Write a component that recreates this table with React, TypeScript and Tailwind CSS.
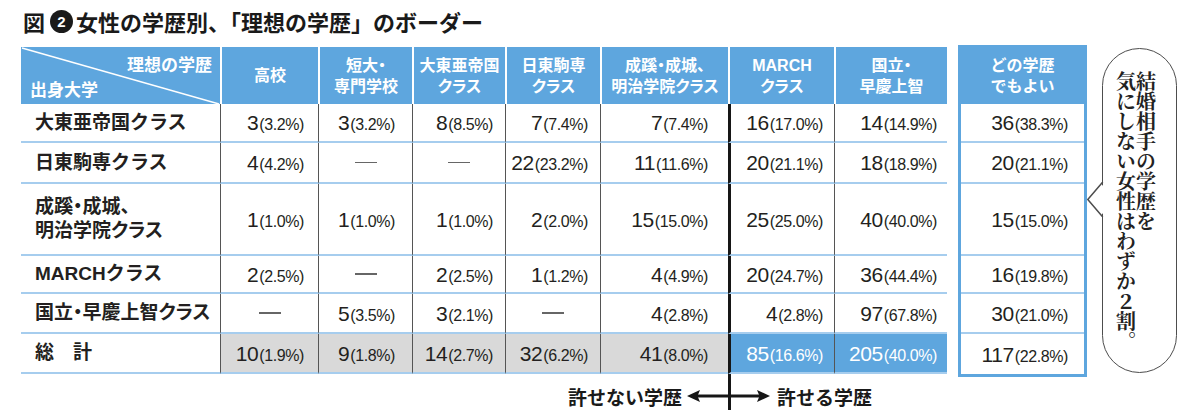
import React from 'react';

type Cell = [string, string] | null;

interface Row {
  label: string[];
  h: string;
  cells: Cell[];
  any: [string, string];
  total?: boolean;
  palt?: boolean;
}

const rows: Row[] = [
  {
    label: ['大東亜帝国クラス'],
    h: 'h-[39px]',
    cells: [['3', '3.2'], ['3', '3.2'], ['8', '8.5'], ['7', '7.4'], ['7', '7.4'], ['16', '17.0'], ['14', '14.9']],
    any: ['36', '38.3'],
  },
  {
    label: ['日東駒専クラス'],
    h: 'h-[41px]',
    cells: [['4', '4.2'], null, null, ['22', '23.2'], ['11', '11.6'], ['20', '21.1'], ['18', '18.9']],
    any: ['20', '21.1'],
  },
  {
    label: ['成蹊・成城、', '明治学院クラス'],
    h: 'h-[72px]',
    cells: [['1', '1.0'], ['1', '1.0'], ['1', '1.0'], ['2', '2.0'], ['15', '15.0'], ['25', '25.0'], ['40', '40.0']],
    any: ['15', '15.0'],
    palt: true,
  },
  {
    label: ['MARCHクラス'],
    h: 'h-[38px]',
    cells: [['2', '2.5'], null, ['2', '2.5'], ['1', '1.2'], ['4', '4.9'], ['20', '24.7'], ['36', '44.4']],
    any: ['16', '19.8'],
  },
  {
    label: ['国立・早慶上智クラス'],
    h: 'h-[40px]',
    cells: [null, ['5', '3.5'], ['3', '2.1'], null, ['4', '2.8'], ['4', '2.8'], ['97', '67.8']],
    any: ['30', '21.0'],
    palt: true,
  },
  {
    label: ['総　計'],
    h: 'h-[40px]',
    cells: [['10', '1.9'], ['9', '1.8'], ['14', '2.7'], ['32', '6.2'], ['41', '8.0'], ['85', '16.6'], ['205', '40.0']],
    any: ['117', '22.8'],
    total: true,
  },
];

const headers: string[][] = [
  ['高校'],
  ['短大・', '専門学校'],
  ['大東亜帝国', 'クラス'],
  ['日東駒専', 'クラス'],
  ['成蹊・成城、', '明治学院クラス'],
  ['MARCH', 'クラス'],
  ['国立・', '早慶上智'],
];

const colPad = ['pr-[14px]', 'pr-[17px]', 'pr-[12px]', 'pr-[12px]', 'pr-[20px]', 'pr-[11px]', 'pr-[10px]'];
const colBorder = [
  'border-l-[1.5px] border-l-[#555]',
  'border-l-[1.5px] border-l-[#555]',
  'border-l-[1.5px] border-l-[#555]',
  'border-l-[1.5px] border-l-[#555]',
  'border-l-[1.5px] border-l-[#555]',
  'border-l-[3px] border-l-[#161616]',
  'border-l-[1.5px] border-l-[#555]',
];

const GRID = 'grid grid-cols-[199px_98px_94px_93px_95px_128px_106px_113px]';

function Num({ v, white }: { v: [string, string]; white?: boolean }) {
  return (
    <span
      className={`font-['Liberation_Sans',sans-serif] leading-none whitespace-nowrap tracking-[-0.4px] ${
        white ? 'text-white' : 'text-[#231f20]'
      }`}
    >
      <span className="text-[21px]">{v[0]}</span>
      <span className="text-[16px] ml-[1px]">({v[1]}%)</span>
    </span>
  );
}

function Dash() {
  return <span className="block w-[22px] h-[1.5px] bg-[#666]" />;
}

export default function App() {
  return (
    <div className="w-[1200px] h-[410px] bg-white overflow-hidden pl-[21px] font-['Liberation_Sans','Noto_Sans_CJK_JP',sans-serif]">
      {/* Title */}
      <div className="h-[47px] flex items-center pb-[5px] pl-[2px] font-['Noto_Sans_CJK_JP',sans-serif] font-bold text-[22px] text-[#1a1a1a] leading-none">
        <span>図</span>
        <span className="ml-[5px] mr-[3px] w-[23px] h-[23px] rounded-full bg-[#1a1a1a] text-white text-[15px] flex items-center justify-center font-['Liberation_Sans',sans-serif]">
          2
        </span>
        <span>女性の学歴別、「理想の学歴」のボーダー</span>
      </div>

      <div className="flex items-start">
        {/* Main table + legend */}
        <div className="w-[926px] flex flex-col">
          {/* Header */}
          <div className={`${GRID} h-[57px] bg-[#5ea6de] text-white font-bold`}>
            <div className="relative h-full flex flex-col justify-between pt-[9px] pb-[3px] text-[17px] leading-[20px]">
              <svg
                className="absolute inset-0 w-full h-full"
                viewBox="0 0 199 57"
                preserveAspectRatio="none"
              >
                <line x1="1" y1="1" x2="198" y2="57" stroke="white" strokeWidth="1.5" />
              </svg>
              <span className="relative self-end pr-[8px]">理想の学歴</span>
              <span className="relative self-start pl-[9px]">出身大学</span>
            </div>
            {headers.map((h, i) => (
              <div
                key={i}
                className="h-full border-l-2 border-l-white flex flex-col items-center justify-center text-[16px] leading-[21px] whitespace-nowrap [font-feature-settings:'palt']"
              >
                {h.map((t, j) => (
                  <span key={j}>{t}</span>
                ))}
              </div>
            ))}
          </div>

          {/* Body */}
          {rows.map((r, ri) => (
            <div key={ri} className={`${GRID} ${r.h}`}>
              <div className="h-full border-b-2 border-b-[#a6cdee] flex flex-col justify-center pl-[14px] font-bold text-[19px] leading-[24px] text-[#231f20]">
                {r.label.map((t, j) => (
                  <span
                    key={j}
                    className={`whitespace-pre ${r.palt ? "[font-feature-settings:'palt']" : ''}`}
                  >
                    {t}
                  </span>
                ))}
              </div>
              {r.cells.map((c, ci) => {
                const bg = r.total ? (ci >= 5 ? 'bg-[#5ea6de]' : 'bg-[#d9d9d9]') : 'bg-white';
                return (
                  <div
                    key={ci}
                    className={`h-full border-b-2 border-b-[#a6cdee] ${colBorder[ci]} ${bg} flex items-center ${
                      c ? `justify-end ${colPad[ci]}` : 'justify-center'
                    }`}
                  >
                    {c ? <Num v={c} white={r.total && ci >= 5} /> : <Dash />}
                  </div>
                );
              })}
            </div>
          ))}

          {/* Legend */}
          <div className="flex h-[36px]">
            <div className="w-[707px] h-full flex items-center justify-end pt-[8px] font-['Noto_Sans_CJK_JP',sans-serif] font-bold text-[19px] leading-none text-[#1a1a1a]">
              <span>許せない学歴</span>
              <svg className="ml-[5px]" width="41" height="14" viewBox="0 0 41 14">
                <polygon points="0,7 13,1 10.5,7 13,13" fill="#161616" />
                <line x1="9" y1="7" x2="41" y2="7" stroke="#161616" strokeWidth="3" />
              </svg>
            </div>
            <div className="w-[3px] h-full bg-[#161616]" />
            <div className="h-full flex items-center pt-[8px] font-['Noto_Sans_CJK_JP',sans-serif] font-bold text-[19px] leading-none text-[#1a1a1a]">
              <svg width="39" height="14" viewBox="0 0 39 14">
                <line x1="0" y1="7" x2="30" y2="7" stroke="#161616" strokeWidth="3" />
                <polygon points="39,7 26,1 28.5,7 26,13" fill="#161616" />
              </svg>
              <span className="ml-[7px]">許せる学歴</span>
            </div>
          </div>
        </div>

        {/* Right table */}
        <div className="ml-[11px] -mt-[2px] w-[129px] border-[3px] border-[#5ea6de] bg-white">
          <div className="h-[56px] bg-[#5ea6de] flex flex-col items-center justify-center text-white font-bold text-[16px] leading-[21px]">
            <span>どの学歴</span>
            <span>でもよい</span>
          </div>
          {rows.map((r, i) => (
            <div
              key={i}
              className={`${r.h} flex items-center justify-end pr-[16px] ${
                i < rows.length - 1 ? 'border-b-2 border-b-[#a6cdee]' : ''
              }`}
            >
              <Num v={r.any} />
            </div>
          ))}
        </div>

        {/* Speech bubble */}
        <div className="relative ml-[15px] mt-[1px] w-[75px] h-[325px] rounded-full border-[1.5px] border-[#4d4d4d] bg-white flex items-center justify-center pr-[8px]">
          <svg className="absolute left-[-16.5px] top-[133px]" width="19" height="35" viewBox="0 0 19 35">
            <polygon points="19,0 0.8,17.5 19,35" fill="white" />
            <polyline
              points="15.75,0 0.8,17.5 15.75,35"
              fill="none"
              stroke="#4d4d4d"
              strokeWidth="1.5"
            />
          </svg>
          <div className="[writing-mode:vertical-rl] font-['Noto_Serif_CJK_JP','Noto_Sans_CJK_JP',serif] font-bold text-[20px] leading-[20px] text-[#222]">
            <div>結婚相手の学歴を</div>
            <div>気にしない女性はわずか２割。</div>
          </div>
        </div>
      </div>
    </div>
  );
}
